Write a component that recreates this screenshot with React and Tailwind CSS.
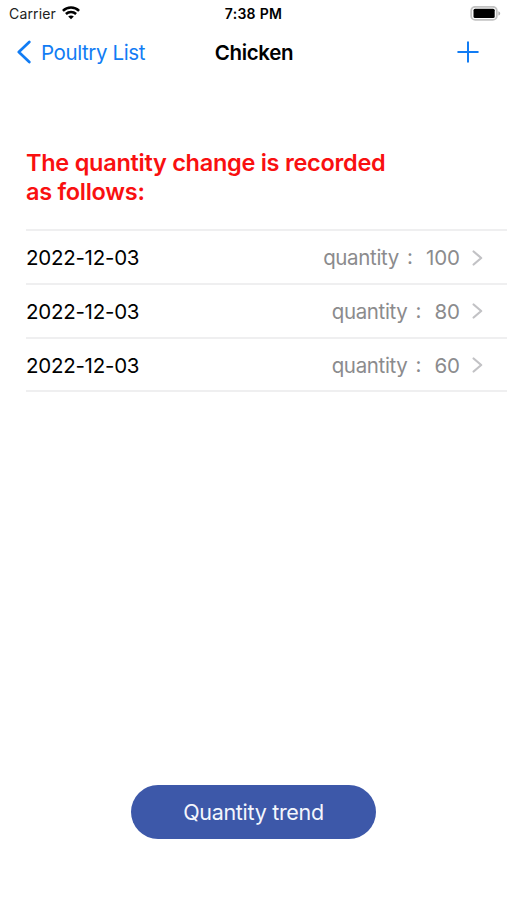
const records = [
  { id: 1, date: '2022-12-03', quantity: 100 },
  { id: 2, date: '2022-12-03', quantity: 80 },
  { id: 3, date: '2022-12-03', quantity: 60 },
];

function WifiIcon() {
  return (
    <svg className="-ml-px -mt-0.5" width="18" height="14" viewBox="0 0 18 14" fill="none" stroke="#000" strokeWidth="2.5">
      <path d="M0.9 4.8C5.4 0.3 12.6 0.3 17.1 4.8" />
      <path d="M3.9 8C6.8 5.2 11.2 5.2 14.1 8" />
      <path d="M9 13.3L6.2 10.5C7.8 9.1 10.2 9.1 11.8 10.5Z" fill="#000" stroke="none" />
    </svg>
  );
}

function BatteryIcon() {
  return (
    <svg width="32" height="16" viewBox="0 0 32 16" fill="none">
      <rect x="1.2" y="0.8" width="25.6" height="13.1" rx="4" stroke="#c2c2c2" strokeWidth="1.8" />
      <rect x="3.5" y="2.8" width="21.2" height="9.2" rx="1.5" fill="#000" />
      <path d="M28.4 5.2C30.8 6.1 30.8 8.7 28.4 9.6Z" fill="#b0b0b0" />
    </svg>
  );
}

function StatusBar() {
  return (
    <div className="grid h-7 grid-cols-3 items-center px-[9px] text-[14px] leading-none">
      <div className="flex items-center gap-[7px] text-[#222]">
        <span className="tracking-[0.15px]">Carrier</span>
        <WifiIcon />
      </div>
      <span className="text-center text-[14px] font-semibold tracking-[0.3px]">7:38 PM</span>
      <div className="-mr-1 flex justify-end">
        <BatteryIcon />
      </div>
    </div>
  );
}

function NavBar() {
  return (
    <div className="grid h-12 grid-cols-3 items-center px-[17px] text-[20.5px] leading-none">
      <button className="flex items-center gap-[10px] whitespace-nowrap text-[#117cf4]">
        <svg width="14" height="24" viewBox="0 0 14 24" fill="none" stroke="currentColor" strokeWidth="2.7" strokeLinecap="round" strokeLinejoin="round">
          <path d="M12.3 2L1.8 12L12.3 22" />
        </svg>
        <span className="pt-[2px] tracking-[-0.4px]">Poultry List</span>
      </button>
      <h1 className="pl-px pt-[2px] text-center font-semibold tracking-[-0.35px]">Chicken</h1>
      <button className="mr-[11px] flex justify-end text-[#117cf4]">
        <svg width="22" height="22" viewBox="0 0 22 22" fill="none" stroke="currentColor" strokeWidth="2" strokeLinecap="round">
          <path d="M11 1.2V20.8M1.2 11H20.8" />
        </svg>
      </button>
    </div>
  );
}

function RecordRow({ date, quantity }) {
  return (
    <li className="flex h-[53.7px] items-center border-b-2 border-[#efeff0] pr-[24px] pt-[3px] text-[20.5px]">
      <span className="tracking-[-0.25px]">{date}</span>
      <span className="ml-auto flex text-[#8b8b8d]">
        <span className="tracking-[-0.35px]">quantity</span>
        <span className="w-[27px] pl-[8px] leading-[28px]">:</span>
        <span className="tracking-[-0.05px]">{quantity}</span>
      </span>
      <svg className="mb-[2px] ml-[12px]" width="11" height="16" viewBox="0 0 11 16" fill="none" stroke="#c2c2c5" strokeWidth="2.2" strokeLinecap="round" strokeLinejoin="round">
        <path d="M1.6 1.5L9.2 8L1.6 14.5" />
      </svg>
    </li>
  );
}

export default function App() {
  return (
    <div className="flex h-[900px] w-[507px] flex-col overflow-hidden bg-white font-['Inter','Liberation_Sans',sans-serif] text-black">
      <StatusBar />
      <NavBar />
      <main className="flex flex-1 flex-col pt-[72px]">
        <h2 className="pl-[26px] text-[23.5px] font-semibold leading-[29px] tracking-[-0.27px] text-[#f91010]">
          The quantity change is recorded
          <br />
          as follows:
        </h2>
        <ul className="ml-[26px] mt-[23.3px] border-t-2 border-[#efeff0]">
          {records.map((record) => (
            <RecordRow key={record.id} date={record.date} quantity={record.quantity} />
          ))}
        </ul>
        <button className="mx-auto mb-[61px] mt-auto h-[54px] w-[245px] rounded-full bg-[#3d58a9] text-[21.5px] tracking-[-0.3px] text-[#f4f6fc]">
          Quantity trend
        </button>
      </main>
    </div>
  );
}
